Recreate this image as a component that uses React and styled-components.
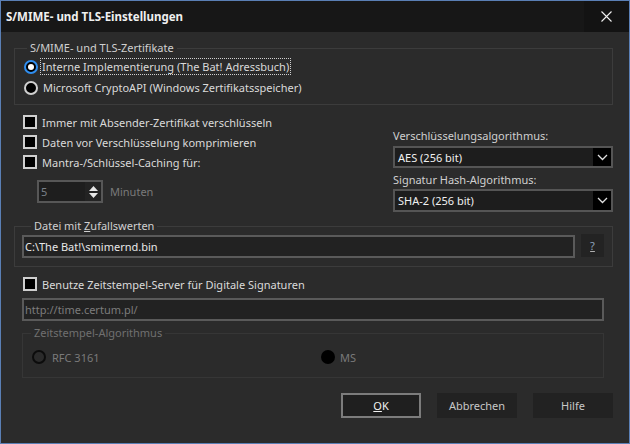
import React from 'react';
import styled, { createGlobalStyle } from 'styled-components';

const Global = createGlobalStyle`
  html, body { margin: 0; padding: 0; background: #2b2b2b; }
  body { font-family: "Noto Sans", "Open Sans", sans-serif; font-size: 11px; }
`;

const Window = styled.div`
  width: 630px;
  height: 444px;
  box-sizing: border-box;
  border: 1px solid #5a7fb5;
  background: #2b2b2b;
  color: #d6d6d6;
  display: flex;
  flex-direction: column;
`;

const TitleBar = styled.div`
  height: 31px;
  background: #171717;
  display: flex;
  align-items: center;
  justify-content: space-between;
  flex-shrink: 0;
`;

const Title = styled.div`
  padding-left: 5px;
  font-weight: 700;
  color: #f0f0f0;
  font-size: 11.5px;
`;

const CloseBtn = styled.div`
  width: 45px;
  height: 31px;
  background: #131313;
  display: flex;
  align-items: center;
  justify-content: center;
`;

const Body = styled.div`
  padding: 8px 16px 0 13px;
  display: flex;
  flex-direction: column;
`;

const Group = styled.fieldset`
  margin: ${p => p.$margin || '0'};
  padding: ${p => p.$pad || '0'};
  border: 1px solid ${p => p.$disabled ? '#363636' : '#3c3c3c'};
  min-width: 0;
`;

const Legend = styled.legend`
  margin-left: ${p => p.$indent || 0}px;
  padding: 0 3px;
  line-height: 16px;
  color: ${p => p.$disabled ? '#707070' : '#d0d0d0'};
`;

const Row = styled.div`
  display: flex;
  align-items: center;
  height: ${p => p.$h || 20}px;
  color: ${p => p.$disabled ? '#7a7a7a' : '#dadada'};
`;

const Radio = styled.span`
  width: 14px;
  height: 14px;
  box-sizing: border-box;
  border-radius: 50%;
  border: 2px solid ${p => p.$ring};
  background: ${p => p.$fill || '#000'};
  display: inline-flex;
  align-items: center;
  justify-content: center;
  margin-right: ${p => p.$gap || 5}px;
  flex-shrink: 0;
  &::after {
    content: '';
    display: ${p => p.$checked ? 'block' : 'none'};
    width: 6px;
    height: 6px;
    border-radius: 50%;
    background: #fff;
  }
`;

const Focus = styled.span`
  outline: 1px dotted #d0d0d0;
  padding: 0 1px;
  margin-left: -2px;
  line-height: 15px;
`;

const Check = styled.span`
  width: 14px;
  height: 14px;
  box-sizing: border-box;
  border: 2px solid #cfcfcf;
  background: #000;
  margin-right: 5px;
  flex-shrink: 0;
`;

const Middle = styled.div`
  display: flex;
  justify-content: space-between;
  padding-left: 9px;
`;

const LeftCol = styled.div`
  padding-top: 7px;
  display: flex;
  flex-direction: column;
`;

const SpinRow = styled.div`
  display: flex;
  align-items: center;
  margin: 8px 0 0 14px;
  gap: 7px;
  color: #7a7a7a;
`;

const Spin = styled.div`
  width: 66px;
  height: 23px;
  box-sizing: border-box;
  border: 2px solid #575757;
  background: #1e1e1e;
  display: flex;
`;

const SpinText = styled.div`
  flex: 1;
  padding-left: 2px;
  line-height: 19px;
  color: #7a8088;
`;

const SpinBtns = styled.div`
  width: 16px;
  background: #232323;
  display: flex;
  flex-direction: column;
  align-items: center;
  justify-content: center;
  gap: 2px;
`;

const RightCol = styled.div`
  width: 220px;
  margin-top: 23px;
  display: flex;
  flex-direction: column;
`;

const Caption = styled.div`
  line-height: 16px;
  margin-bottom: ${p => p.$mb || 2}px;
  margin-top: ${p => p.$mt || 0}px;
  color: #d0d0d0;
`;

const Combo = styled.div`
  height: ${p => p.$h || 22}px;
  box-sizing: border-box;
  border: 2px solid #555;
  background: #1d1d1d;
  display: flex;
  color: #f0f0f0;
`;

const ComboText = styled.div`
  flex: 1;
  padding-left: 3px;
  display: flex;
  align-items: center;
`;

const ComboArrow = styled.div`
  width: 18px;
  background: #000;
  display: flex;
  align-items: center;
  justify-content: center;
`;

const FileRow = styled.div`
  display: flex;
  align-items: center;
  gap: 6px;
  margin-top: 1px;
`;

const Edit = styled.div`
  flex: ${p => p.$flex ? 1 : 'none'};
  height: 23px;
  box-sizing: border-box;
  border: 2px solid #5a5a5a;
  background: #222;
  padding-left: 1px;
  line-height: 19px;
  color: ${p => p.$disabled ? '#7c7c7c' : '#e8e8e8'};
  margin: ${p => p.$margin || '0'};
`;

const HelpBtn = styled.div`
  width: 23px;
  height: 23px;
  background: #232323;
  display: flex;
  align-items: center;
  justify-content: center;
  margin-top: -2px;
  color: #8ea4bc;
  u { text-decoration-color: #b0b0b0; }
`;

const RadioGrid = styled.div`
  display: grid;
  grid-template-columns: 289px 1fr;
  padding-left: 9px;
`;

const Buttons = styled.div`
  display: flex;
  justify-content: flex-end;
  gap: 16px;
  margin-top: 15px;
`;

const Button = styled.div`
  width: 80px;
  height: 25px;
  box-sizing: border-box;
  border: 2px solid ${p => p.$default ? '#7c7c7c' : 'transparent'};
  background: ${p => p.$default ? '#1f1f1f' : '#222'};
  color: ${p => p.$default ? '#f2f2f2' : '#c8c8c8'};
  display: flex;
  align-items: center;
  justify-content: center;
`;

const Chevron = () => (
  <svg width="11" height="7" viewBox="0 0 11 7">
    <path d="M1 1 L5.5 5.5 L10 1" fill="none" stroke="#e0e0e0" strokeWidth="1.3" />
  </svg>
);

export default function App() {
  return (
    <>
      <Global />
      <Window>
        <TitleBar>
          <Title>S/MIME- und TLS-Einstellungen</Title>
          <CloseBtn>
            <svg width="11" height="11" viewBox="0 0 11 11">
              <path d="M0.5 0.5 L10.5 10.5 M10.5 0.5 L0.5 10.5" stroke="#f0f0f0" strokeWidth="1.1" />
            </svg>
          </CloseBtn>
        </TitleBar>
        <Body>
          <Group $pad="0 0 6px 9px">
            <Legend $indent={3}>S/MIME- und TLS-Zertifikate</Legend>
            <Row $h={21}>
              <Radio $ring="#2f8ef0" $checked />
              <Focus>Interne Implementierung (The Bat! Adressbuch)</Focus>
            </Row>
            <Row $h={21}>
              <Radio $ring="#cfcfcf" />
              Microsoft CryptoAPI (Windows Zertifikatsspeicher)
            </Row>
          </Group>

          <Middle>
            <LeftCol>
              <Row><Check />Immer mit Absender-Zertifikat verschlüsseln</Row>
              <Row><Check />Daten vor Verschlüsselung komprimieren</Row>
              <Row><Check />Mantra-/Schlüssel-Caching für:</Row>
              <SpinRow>
                <Spin>
                  <SpinText>5</SpinText>
                  <SpinBtns>
                    <svg width="9" height="5" viewBox="0 0 9 5"><path d="M0 5 L4.5 0 L9 5 Z" fill="#e6e6e6" /></svg>
                    <svg width="9" height="5" viewBox="0 0 9 5"><path d="M0 0 L4.5 5 L9 0 Z" fill="#e6e6e6" /></svg>
                  </SpinBtns>
                </Spin>
                Minuten
              </SpinRow>
            </LeftCol>
            <RightCol>
              <Caption>Verschlüsselungsalgorithmus:</Caption>
              <Combo>
                <ComboText>AES (256 bit)</ComboText>
                <ComboArrow><Chevron /></ComboArrow>
              </Combo>
              <Caption $mt={4} $mb={1}>Signatur Hash-Algorithmus:</Caption>
              <Combo $h={23}>
                <ComboText>SHA-2 (256 bit)</ComboText>
                <ComboArrow><Chevron /></ComboArrow>
              </Combo>
            </RightCol>
          </Middle>

          <Group $margin="6px 0 0 0" $pad="0 8px 8px 7px">
            <Legend $indent={9}>Datei mit <u>Z</u>ufallswerten</Legend>
            <FileRow>
              <Edit $flex>C:\The Bat!\smimernd.bin</Edit>
              <HelpBtn><u>?</u></HelpBtn>
            </FileRow>
          </Group>

          <Row $h={20} style={{ marginTop: 7, paddingLeft: 9 }}>
            <Check />Benutze Zeitstempel-Server für Digitale Signaturen
          </Row>
          <Edit $disabled $margin="4px 9px 0 8px">http://time.certum.pl/</Edit>

          <Group $disabled $margin="4px 9px 0 8px" $pad="0 0 10px 0">
            <Legend $disabled $indent={8}>Zeitstempel-Algorithmus</Legend>
            <RadioGrid>
              <Row $disabled style={{ marginTop: 6 }}>
                <Radio $ring="#0c0c0c" $fill="#2b2b2b" $gap={6} />RFC 3161
              </Row>
              <Row $disabled style={{ marginTop: 6 }}>
                <Radio $ring="#000" $gap={5} />MS
              </Row>
            </RadioGrid>
          </Group>

          <Buttons>
            <Button $default><span><u>O</u>K</span></Button>
            <Button>Abbrechen</Button>
            <Button>Hilfe</Button>
          </Buttons>
        </Body>
      </Window>
    </>
  );
}
